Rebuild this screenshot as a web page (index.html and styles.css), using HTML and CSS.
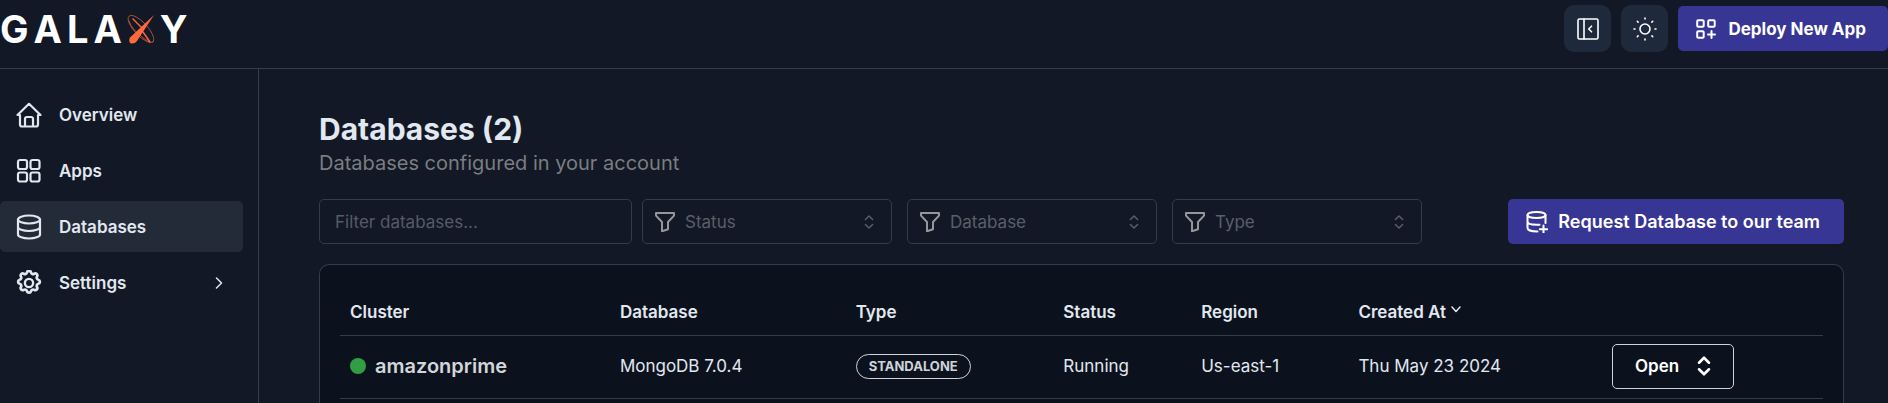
FILE: index.html
```html
<!DOCTYPE html>
<html lang="en">
<head>
<meta charset="utf-8">
<meta name="viewport" content="width=device-width, initial-scale=1">
<title>Galaxy - Databases</title>
<link rel="stylesheet" href="styles.css">
</head>
<body>
<svg class="sprite" width="0" height="0" aria-hidden="true">
  <symbol id="funnel" viewBox="0 0 20 20"><path d="M1 1h18v2.600l-6 6.400v7.300l-6 2V10L1 3.600z"/></symbol>
  <symbol id="updown" viewBox="0 0 12 20"><path d="M1.500 7 6 2.500 10.500 7M1.500 13 6 17.500 10.500 13"/></symbol>
</svg>
<header class="topbar">
  <div class="logo">
    <span>G</span><span>A</span><span>L</span><span>A</span>
    <svg class="logo-x" viewBox="0 0 28 30" role="img" aria-label="X">
      <g fill="none" stroke="#fd6a3c">
        <ellipse cx="14" cy="15" rx="17.500" ry="6.500" transform="rotate(47 14 15)" stroke-width=".6"/>
        <path d="M6 5l9 9M16 18l7 10" stroke-width="1.400"/>
        <path d="M2 7q2 9 20 21" stroke-width=".6"/>
      </g>
      <path d="M27 1 10 27q-2 3-6 2.500-3-2-1-6z" fill="#fd6a3c" stroke="none"/>
    </svg>
    <span>Y</span>
  </div>
  <div class="actions">
    <button class="square" type="button" aria-label="Collapse sidebar">
      <svg class="icon-md" viewBox="0 0 22 22"><rect x="1" y="1" width="20" height="20" rx="1.500"/><path d="M7 1v20M14.500 8.200 11.700 11l2.800 2.800"/></svg>
    </button>
    <button class="square" type="button" aria-label="Toggle theme">
      <svg class="icon-lg" viewBox="0 0 24 24"><circle cx="12" cy="12" r="5"/><path d="M12 1v1M12 22v1M1 12h1M22 12h1M4.300 4.300l.8.8M18.900 18.900l.8.8M4.300 19.700l.8-.8M18.900 5.100l.8-.8"/></svg>
    </button>
    <button class="primary deploy" type="button">
      <svg class="icon-sm" viewBox="0 0 20 20"><rect x="1.200" y="1.200" width="6.500" height="6.500" rx="1"/><rect x="12.200" y="1.200" width="6.500" height="6.500" rx="1"/><rect x="1.200" y="12.200" width="6.500" height="6.500" rx="1"/><path d="M15.500 12v7M12 15.500h7"/></svg>
      Deploy New App
    </button>
  </div>
</header>
<div class="shell">
  <nav class="sidebar">
    <a class="item" href="#overview">
      <svg class="nav-icon" viewBox="0 0 26 26"><path d="M1.500 13 13 1.800 24.500 13H22v9.500q0 2-2 2H6q-2 0-2-2V13zM9 24.500V17q0-2 2-2h4q2 0 2 2v7.500"/></svg>
      Overview
    </a>
    <a class="item" href="#apps">
      <svg class="nav-icon" viewBox="0 0 26 26"><rect x="2" y="2" width="9" height="9" rx="2"/><rect x="14.500" y="2" width="9" height="9" rx="2"/><rect x="2" y="14.500" width="9" height="9" rx="2"/><rect x="14.500" y="14.500" width="9" height="9" rx="2"/></svg>
      Apps
    </a>
    <a class="item active" href="#databases" aria-current="page">
      <svg class="nav-icon" viewBox="0 0 26 26"><ellipse cx="13" cy="5.500" rx="11" ry="4"/><path d="M2 5.500v15c0 2.200 5 4 11 4s11-1.800 11-4v-15M2 13c0 2.200 5 4 11 4s11-1.800 11-4"/></svg>
      Databases
    </a>
    <a class="item" href="#settings">
      <svg class="nav-icon" viewBox="0 0 24 24"><circle cx="12" cy="12" r="3.800"/><path d="M10.325 3.317c.426-1.756 2.924-1.756 3.350 0a1.724 1.724 0 0 0 2.573 1.066c1.543-.94 3.310.826 2.370 2.370a1.724 1.724 0 0 0 1.065 2.572c1.756.426 1.756 2.924 0 3.350a1.724 1.724 0 0 0-1.066 2.573c.94 1.543-.826 3.310-2.370 2.370a1.724 1.724 0 0 0-2.572 1.065c-.426 1.756-2.924 1.756-3.350 0a1.724 1.724 0 0 0-2.573-1.066c-1.543.94-3.310-.826-2.370-2.370a1.724 1.724 0 0 0-1.065-2.572c-1.756-.426-1.756-2.924 0-3.350a1.724 1.724 0 0 0 1.066-2.573c-.94-1.543.826-3.310 2.370-2.370 1 .608 2.296.07 2.572-1.065z" transform="translate(12 12) scale(1.120) translate(-12 -12)"/></svg>
      Settings
      <svg class="caret" viewBox="0 0 8 12"><path d="M1.500 1 6.500 6l-5 5"/></svg>
    </a>
  </nav>
  <main class="content">
    <h1>Databases (2)</h1>
    <p class="lead">Databases configured in your account</p>
    <form class="filters">
      <input class="search" type="text" placeholder="Filter databases..." aria-label="Filter databases">
      <div class="selects">
        <label class="select"><svg class="icon-sm funnel"><use href="#funnel"/></svg><select aria-label="Status"><option>Status</option></select><svg class="updown"><use href="#updown"/></svg></label>
        <label class="select"><svg class="icon-sm funnel"><use href="#funnel"/></svg><select aria-label="Database"><option>Database</option></select><svg class="updown"><use href="#updown"/></svg></label>
        <label class="select"><svg class="icon-sm funnel"><use href="#funnel"/></svg><select aria-label="Type"><option>Type</option></select><svg class="updown"><use href="#updown"/></svg></label>
      </div>
      <button class="primary request" type="button">
        <svg class="icon-md" viewBox="0 0 22 22"><ellipse cx="10.500" cy="4" rx="9" ry="3"/><path d="M1.500 4v13c0 2 4 3.500 10 3.500M19.500 4v8M1.500 10.500c0 2 4 3.200 9 3.200h3M17.500 14.500v7.500M13.800 18.200h7.500"/></svg>
        Request Database to our team
      </button>
    </form>
    <section class="card">
      <table>
        <colgroup><col class="c-cluster"><col class="c-db"><col class="c-type"><col class="c-status"><col class="c-region"><col class="c-date"><col></colgroup>
        <thead>
          <tr><th>Cluster</th><th>Database</th><th>Type</th><th>Status</th><th>Region</th><th><span class="sort">Created At<svg viewBox="0 0 10 10"><path d="M1 1l4 4.500L9 1"/></svg></span></th><th></th></tr>
        </thead>
        <tbody>
          <tr>
            <td><span class="cluster"><i class="dot"></i>amazonprime</span></td>
            <td>MongoDB 7.0.4</td>
            <td><span class="badge">STANDALONE</span></td>
            <td>Running</td>
            <td>Us-east-1</td>
            <td>Thu May 23 2024</td>
            <td><button class="open" type="button">Open<svg class="open-icon"><use href="#updown"/></svg></button></td>
          </tr>
        </tbody>
      </table>
    </section>
  </main>
</div>
</body>
</html>
```
FILE: styles.css
```css
* { box-sizing: border-box; }
body {
  margin: 0;
  min-height: 100vh;
  display: flex;
  flex-direction: column;
  background: #121826;
  color: #e2e8f0;
  font: 400 17px/24px Inter, "Liberation Sans", sans-serif;
}
button, input, select { font: inherit; color: inherit; }
button { cursor: pointer; }
svg { fill: none; stroke: currentColor; stroke-width: 2; stroke-linecap: round; stroke-linejoin: round; flex: none; }
.sprite { position: absolute; }

.topbar {
  display: flex;
  justify-content: space-between;
  align-items: flex-start;
  height: 69px;
  padding-top: 5px;
  border-bottom: 1px solid #333c4b;
}
.logo { display: flex; gap: 5px; padding-top: 5px; color: #fff; font-size: 38px; font-weight: 700; line-height: 38px; }
.logo-x { width: 28px; height: 30px; margin-top: 4px; }
.actions { display: flex; align-items: center; gap: 10px; }
.square {
  display: grid;
  place-items: center;
  width: 47px;
  height: 47px;
  padding: 0;
  border: 0;
  border-radius: 10px;
  background: #1e293b;
  color: #fff;
}
.square svg { stroke-width: 1.600; }
.primary {
  display: flex;
  align-items: center;
  height: 45px;
  border: 0;
  border-radius: 5px;
  background: #383694;
  color: #fff;
  font-weight: 700;
  white-space: nowrap;
}
.deploy { gap: 12px; padding: 0 22px 0 18px; }
.request { gap: 10px; padding: 0 24px 0 18px; margin-left: auto; font-size: 18px; font-weight: 600; }
.icon-sm { width: 20px; height: 20px; }
.icon-md { width: 22px; height: 22px; }
.icon-lg { width: 24px; height: 24px; }

.shell { display: flex; flex: 1; }
.sidebar {
  display: flex;
  flex-direction: column;
  flex: none;
  gap: 5px;
  width: 259px;
  padding: 20px 15px 0 0;
  border-right: 1px solid #333c4b;
}
.item {
  display: flex;
  align-items: center;
  gap: 17px;
  height: 51px;
  padding: 0 20px 0 16px;
  border-radius: 5px;
  color: #e2e8f0;
  font-weight: 600;
  text-decoration: none;
}
.active { background: #232a38; }
.nav-icon { width: 26px; height: 26px; stroke-width: 2.200; }
.caret { width: 8px; height: 12px; margin-left: auto; stroke-width: 1.500; }

.content { display: flex; flex-direction: column; flex: 1; min-width: 0; padding: 40px 44px 0 60px; }
h1 { margin: 0; font-size: 30px; line-height: 40px; font-weight: 700; }
.lead { margin: 2px 0 24px; color: #7b7d80; font-size: 20px; line-height: 24px; font-weight: 400; }
.filters { display: flex; gap: 10px; margin-bottom: 20px; }
.search, .select { height: 45px; border: 1px solid #333c4b; border-radius: 5px; background: transparent; }
.search { width: 313px; padding: 0 15px; outline: 0; }
.search::placeholder { color: #565b66; opacity: 1; }
.selects { display: flex; gap: 15px; }
.select { display: flex; align-items: center; gap: 10px; width: 250px; padding: 0 17px 0 12px; color: #5b5f69; }
.select select { flex: 1; min-width: 0; appearance: none; padding: 0; border: 0; outline: 0; background: transparent; }
.funnel { color: #95979b; }
.updown { width: 10px; height: 16px; stroke-width: 1.800; }

.card { flex: 1; padding: 24px 20px 0; border: 1px solid #333c4b; border-bottom: 0; border-radius: 10px 10px 0 0; background: #0c121d; }
table { width: 100%; table-layout: fixed; border-collapse: collapse; }
.c-cluster { width: 18.200%; }
.c-db { width: 15.900%; }
.c-type { width: 14%; }
.c-status { width: 9.300%; }
.c-region { width: 10.600%; }
.c-date { width: 17.100%; }
th, td { padding: 0 10px; border-bottom: 1px solid #333c4b; text-align: left; }
th { height: 46px; font-weight: 600; }
td { height: 63px; padding-bottom: 1px; }
.sort { display: flex; gap: 5px; }
.sort svg { width: 10px; height: 10px; margin-top: 6px; stroke-width: 1.500; }
.cluster { display: flex; align-items: center; gap: 9px; color: #d3d6db; font-size: 20px; font-weight: 600; }
.dot { width: 16px; height: 16px; border-radius: 50%; background: #2f9e44; }
.badge { display: inline-flex; align-items: center; height: 25px; padding: 0 12px; border: 1px solid #ced4da; border-radius: 13px; color: #ced4da; font-size: 13px; font-weight: 700; }
.open { display: flex; align-items: center; gap: 18px; height: 45px; padding: 0 22px; border: 1px solid #ced4da; border-radius: 5px; background: transparent; color: #fff; font-weight: 600; }
.open-icon { width: 14px; height: 22px; stroke-width: 2.400; }
```
